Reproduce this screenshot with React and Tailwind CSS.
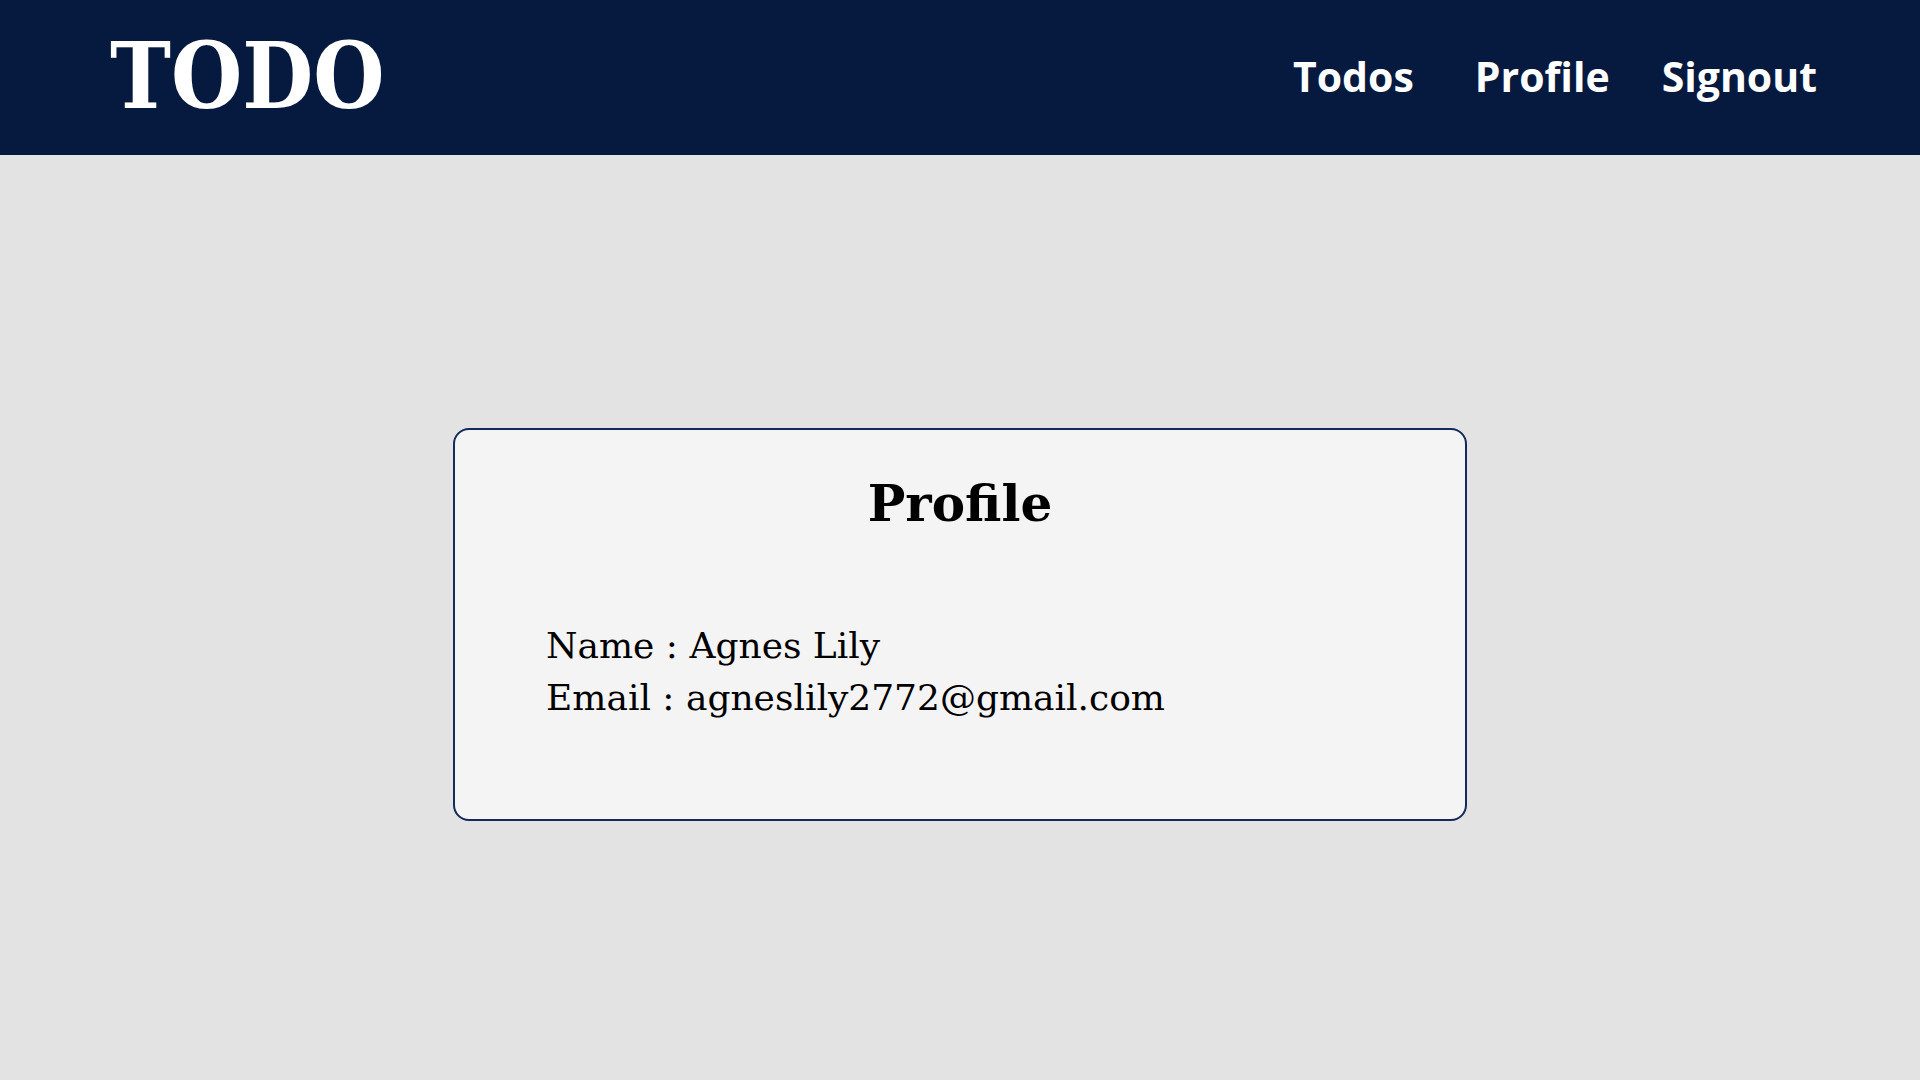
export default function App() {
  return (
    <div className="min-h-screen bg-[#e3e3e3]">
      <nav className="h-[155px] bg-[#061a40] flex items-center justify-between pl-[110px] pr-[103px]">
        <h1 className="text-white text-[91px] font-bold leading-none font-['DejaVu_Serif_Condensed','DejaVu_Serif',serif] mt-[-2px]">
          TODO
        </h1>
        <ul className="flex items-center text-white text-[41px] font-bold font-['Open_Sans',sans-serif] mt-[-2px]">
          <li className="mr-[61px]">Todos</li>
          <li className="mr-[52px]">Profile</li>
          <li>Signout</li>
        </ul>
      </nav>

      <main className="flex justify-center pt-[273px]">
        <div className="w-[1014px] h-[393px] bg-[#f4f4f4] border-2 border-[#142a5a] rounded-[16px] px-[91px] pt-[49px] font-['DejaVu_Serif',serif] text-black">
          <h2 className="text-center text-[50px] font-bold leading-none">Profile</h2>
          <div className="mt-[91px] text-[36px] leading-[52px]">
            <p>Name : Agnes Lily</p>
            <p>Email : agneslily2772@gmail.com</p>
          </div>
        </div>
      </main>
    </div>
  );
}
